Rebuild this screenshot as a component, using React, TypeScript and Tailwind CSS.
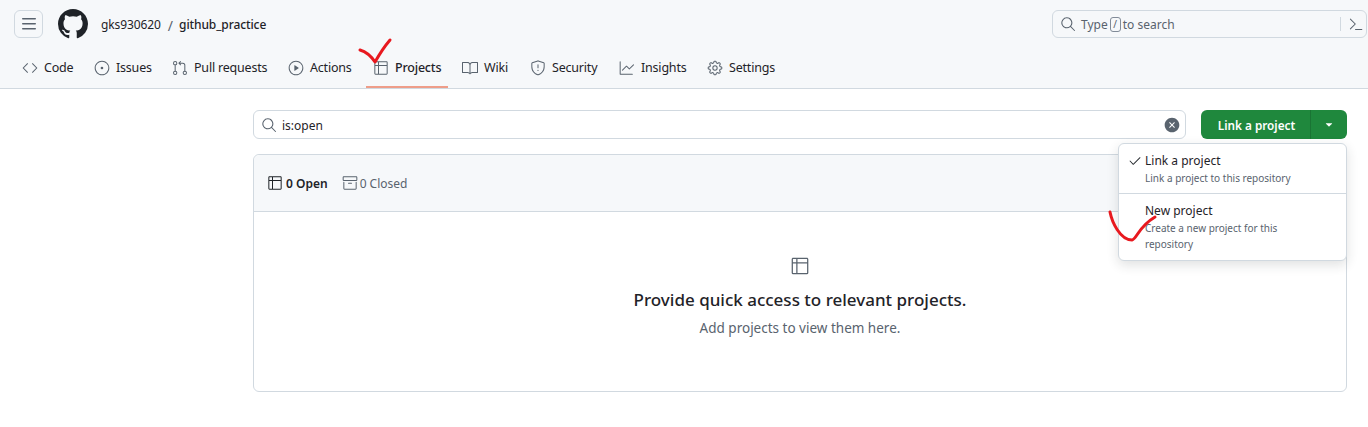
import React from "react";
import {
  GoCode, GoIssueOpened, GoGitPullRequest, GoPlay, GoTable, GoBook, GoShield, GoGraph, GoGear,
  GoSearch, GoCheck, GoXCircleFill, GoArchive, GoTriangleDown, GoCommandPalette,
} from "react-icons/go";

const tabs = [
  { label: "Code", Icon: GoCode, w: "w-[72px]" },
  { label: "Issues", Icon: GoIssueOpened, w: "w-[78px]" },
  { label: "Pull requests", Icon: GoGitPullRequest, w: "w-[116px]" },
  { label: "Actions", Icon: GoPlay, w: "w-[85px]" },
  { label: "Projects", Icon: GoTable, w: "w-[89px]", active: true },
  { label: "Wiki", Icon: GoBook, w: "w-[68px]" },
  { label: "Security", Icon: GoShield, w: "w-[89px]" },
  { label: "Insights", Icon: GoGraph, w: "w-[88px]" },
  { label: "Settings", Icon: GoGear, w: "w-[88px]" },
];

function GithubMark({ size, className }: { size: number; className?: string }) {
  return (
    <svg width={size} height={size} viewBox="0 0 16 16" fill="currentColor" className={className}>
      <path d="M8 0c4.42 0 8 3.58 8 8a8.013 8.013 0 0 1-5.45 7.59c-.4.08-.55-.17-.55-.38 0-.27.01-1.13.01-2.2 0-.75-.25-1.23-.54-1.48 1.78-.2 3.65-.88 3.65-3.95 0-.88-.31-1.59-.82-2.15.08-.2.36-1.02-.08-2.12 0 0-.67-.22-2.2.82-.64-.18-1.32-.27-2-.27-.68 0-1.36.09-2 .27-1.53-1.03-2.2-.82-2.2-.82-.44 1.1-.16 1.92-.08 2.12-.51.56-.82 1.28-.82 2.15 0 3.06 1.86 3.75 3.64 3.95-.23.2-.44.55-.51 1.07-.46.21-1.61.55-2.33-.66-.15-.24-.6-.83-1.23-.82-.67.01-.27.38.01.53.34.19.73.9.82 1.13.16.45.68 1.31 2.69.94 0 .67.01 1.3.01 1.49 0 .21-.15.45-.55.38A7.995 7.995 0 0 1 0 8c0-4.42 3.58-8 8-8Z" />
    </svg>
  );
}

function Hamburger() {
  return (
    <svg width={16} height={16} viewBox="0 0 16 16" fill="currentColor">
      <path d="M1 2.75A.75.75 0 0 1 1.75 2h12.5a.75.75 0 0 1 0 1.5H1.75A.75.75 0 0 1 1 2.75Zm0 5A.75.75 0 0 1 1.75 7h12.5a.75.75 0 0 1 0 1.5H1.75A.75.75 0 0 1 1 7.75ZM1.75 12h12.5a.75.75 0 0 1 0 1.5H1.75a.75.75 0 0 1 0-1.5Z" />
    </svg>
  );
}

export default function App() {
  return (
    <div className="relative h-[427px] w-[1368px] overflow-hidden bg-white text-[#1f2328] font-['Noto_Sans','Open_Sans',sans-serif] text-[12.5px]">
      <header className="h-[89px] border-b border-[#d1d9e0] bg-[#f6f8fa]">
        <div className="flex h-[48px] items-center pl-[14px] pr-[1px]">
          <button className="flex h-[28px] w-[29px] items-center justify-center rounded-md border border-[#d1d9e0] text-[#59636e]">
            <Hamburger />
          </button>
          <GithubMark size={30} className="ml-[15px] text-[#1f2328]" />
          <span className="ml-[13px] pt-[2px] text-[12px] tracking-[-0.1px] text-[#1f2328]">gks930620</span>
          <span className="ml-[7px] pt-[2px] text-[#59636e] text-[14px]">/</span>
          <span className="ml-[6px] pt-[2px] text-[12px] font-medium tracking-[-0.1px] text-[#1f2328]">github_practice</span>
          <div className="ml-auto flex h-[28px] w-[315px] items-center rounded-md border border-[#d1d9e0] pl-[6px] text-[12px] text-[#59636e]">
            <GoSearch size={16} className="ml-[1px]" />
            <span className="ml-[5px] pt-[2px]">Type</span>
            <span className="mx-[2px] flex h-[15px] w-[11px] items-center justify-center rounded-[3px] border border-[#818b98] text-[10px] leading-none">/</span>
            <span className="pt-[2px]">to search</span>
            <span className="ml-auto mr-[7px] h-[14px] w-px bg-[#d1d9e0]" />
            <GoCommandPalette size={16} className="mr-[2px]" />
          </div>
        </div>
        <nav className="flex h-[40px] items-start pl-[14px]">
          {tabs.map(({ label, Icon, w, active }) => (
            <div key={label} className={`relative flex h-[40px] items-center gap-[6px] pl-[8px] ${w} ${active ? "font-medium text-[#1f2328]" : "text-[#1f2328]"}`}>
              <Icon size={16} className="shrink-0 text-[#59636e]" />
              <span className="whitespace-nowrap tracking-[-0.2px]">{label}</span>
              {active && <span className="absolute bottom-0 left-[1px] h-[2px] w-[82px] bg-[#ee9d89]" />}
            </div>
          ))}
        </nav>
      </header>

      <main className="pl-[253px] pr-[21px] pt-[21px]">
        <div className="flex items-center">
          <div className="flex h-[29px] w-[933px] items-center rounded-md border border-[#d1d9e0] bg-white pl-[7px] pr-[5px]">
            <GoSearch size={16} className="text-[#59636e]" />
            <span className="ml-[5px] pt-[2px] text-[12px] text-[#1f2328]">is:open</span>
            <GoXCircleFill size={16} className="ml-auto text-[#59636e]" />
          </div>
          <div className="ml-auto flex h-[29px] w-[146px] rounded-md bg-[#1f883d] text-white">
            <span className="flex w-[110px] items-center justify-center border-r border-[#1a7434] pl-[2px] pt-[2px] font-semibold text-[11.75px]">Link a project</span>
            <span className="flex flex-1 items-center justify-center"><GoTriangleDown size={12} /></span>
          </div>
        </div>

        <section className="mt-[15px] h-[238px] rounded-md border border-[#d1d9e0]">
          <div className="flex h-[57px] items-center rounded-t-md border-b border-[#d1d9e0] bg-[#f6f8fa] pl-[13px]">
            <GoTable size={16} className="text-[#1f2328]" />
            <span className="ml-[3px] pt-[2px] font-semibold text-[12px] text-[#1f2328]">0 Open</span>
            <GoArchive size={16} className="ml-[14px] text-[#59636e]" />
            <span className="ml-[2px] pt-[2px] text-[12px] text-[#59636e]">0 Closed</span>
          </div>
          <div className="flex flex-col items-center pt-[44px]">
            <GoTable size={20} className="text-[#59636e]" />
            <h2 className="mt-[12px] text-[17px] font-medium leading-[24px] text-[#1f2328]">Provide quick access to relevant projects.</h2>
            <p className="mt-[6px] text-[13.5px] leading-[20px] text-[#59636e]">Add projects to view them here.</p>
          </div>
        </section>
      </main>

      <div className="absolute left-[1118px] top-[143px] h-[118px] w-[229px] rounded-md border border-[#d1d9e0] bg-white shadow-[0_4px_12px_rgba(37,41,46,0.14)]">
        <div className="relative h-[49px] pl-[26px] pt-[8px]">
          <GoCheck size={14} className="absolute left-[9px] top-[10px] text-[#1f2328]" />
          <div className="text-[12px] leading-[18px] text-[#1f2328]">Link a project</div>
          <div className="text-[10px] leading-[16px] text-[#59636e]">Link a project to this repository</div>
        </div>
        <div className="border-t border-[#d1d9e0] pl-[26px] pr-[16px] pt-[8px]">
          <div className="text-[12px] leading-[18px] text-[#1f2328]">New project</div>
          <div className="w-[150px] text-[10px] leading-[16px] text-[#59636e]">Create a new project for this repository</div>
        </div>
      </div>

      <svg className="pointer-events-none absolute left-0 top-0" width="1368" height="427" fill="none">
        <path d="M360 50 C367 52 371 56 375 62 C379 55 384 47 390 40" stroke="#e8191f" strokeWidth="3" strokeLinecap="round" strokeLinejoin="round" />
        <path d="M1110 212 C1112 222 1120 240 1132 240 C1137 239 1138 227 1155 217" stroke="#e8191f" strokeWidth="3" strokeLinecap="round" strokeLinejoin="round" />
      </svg>
    </div>
  );
}
